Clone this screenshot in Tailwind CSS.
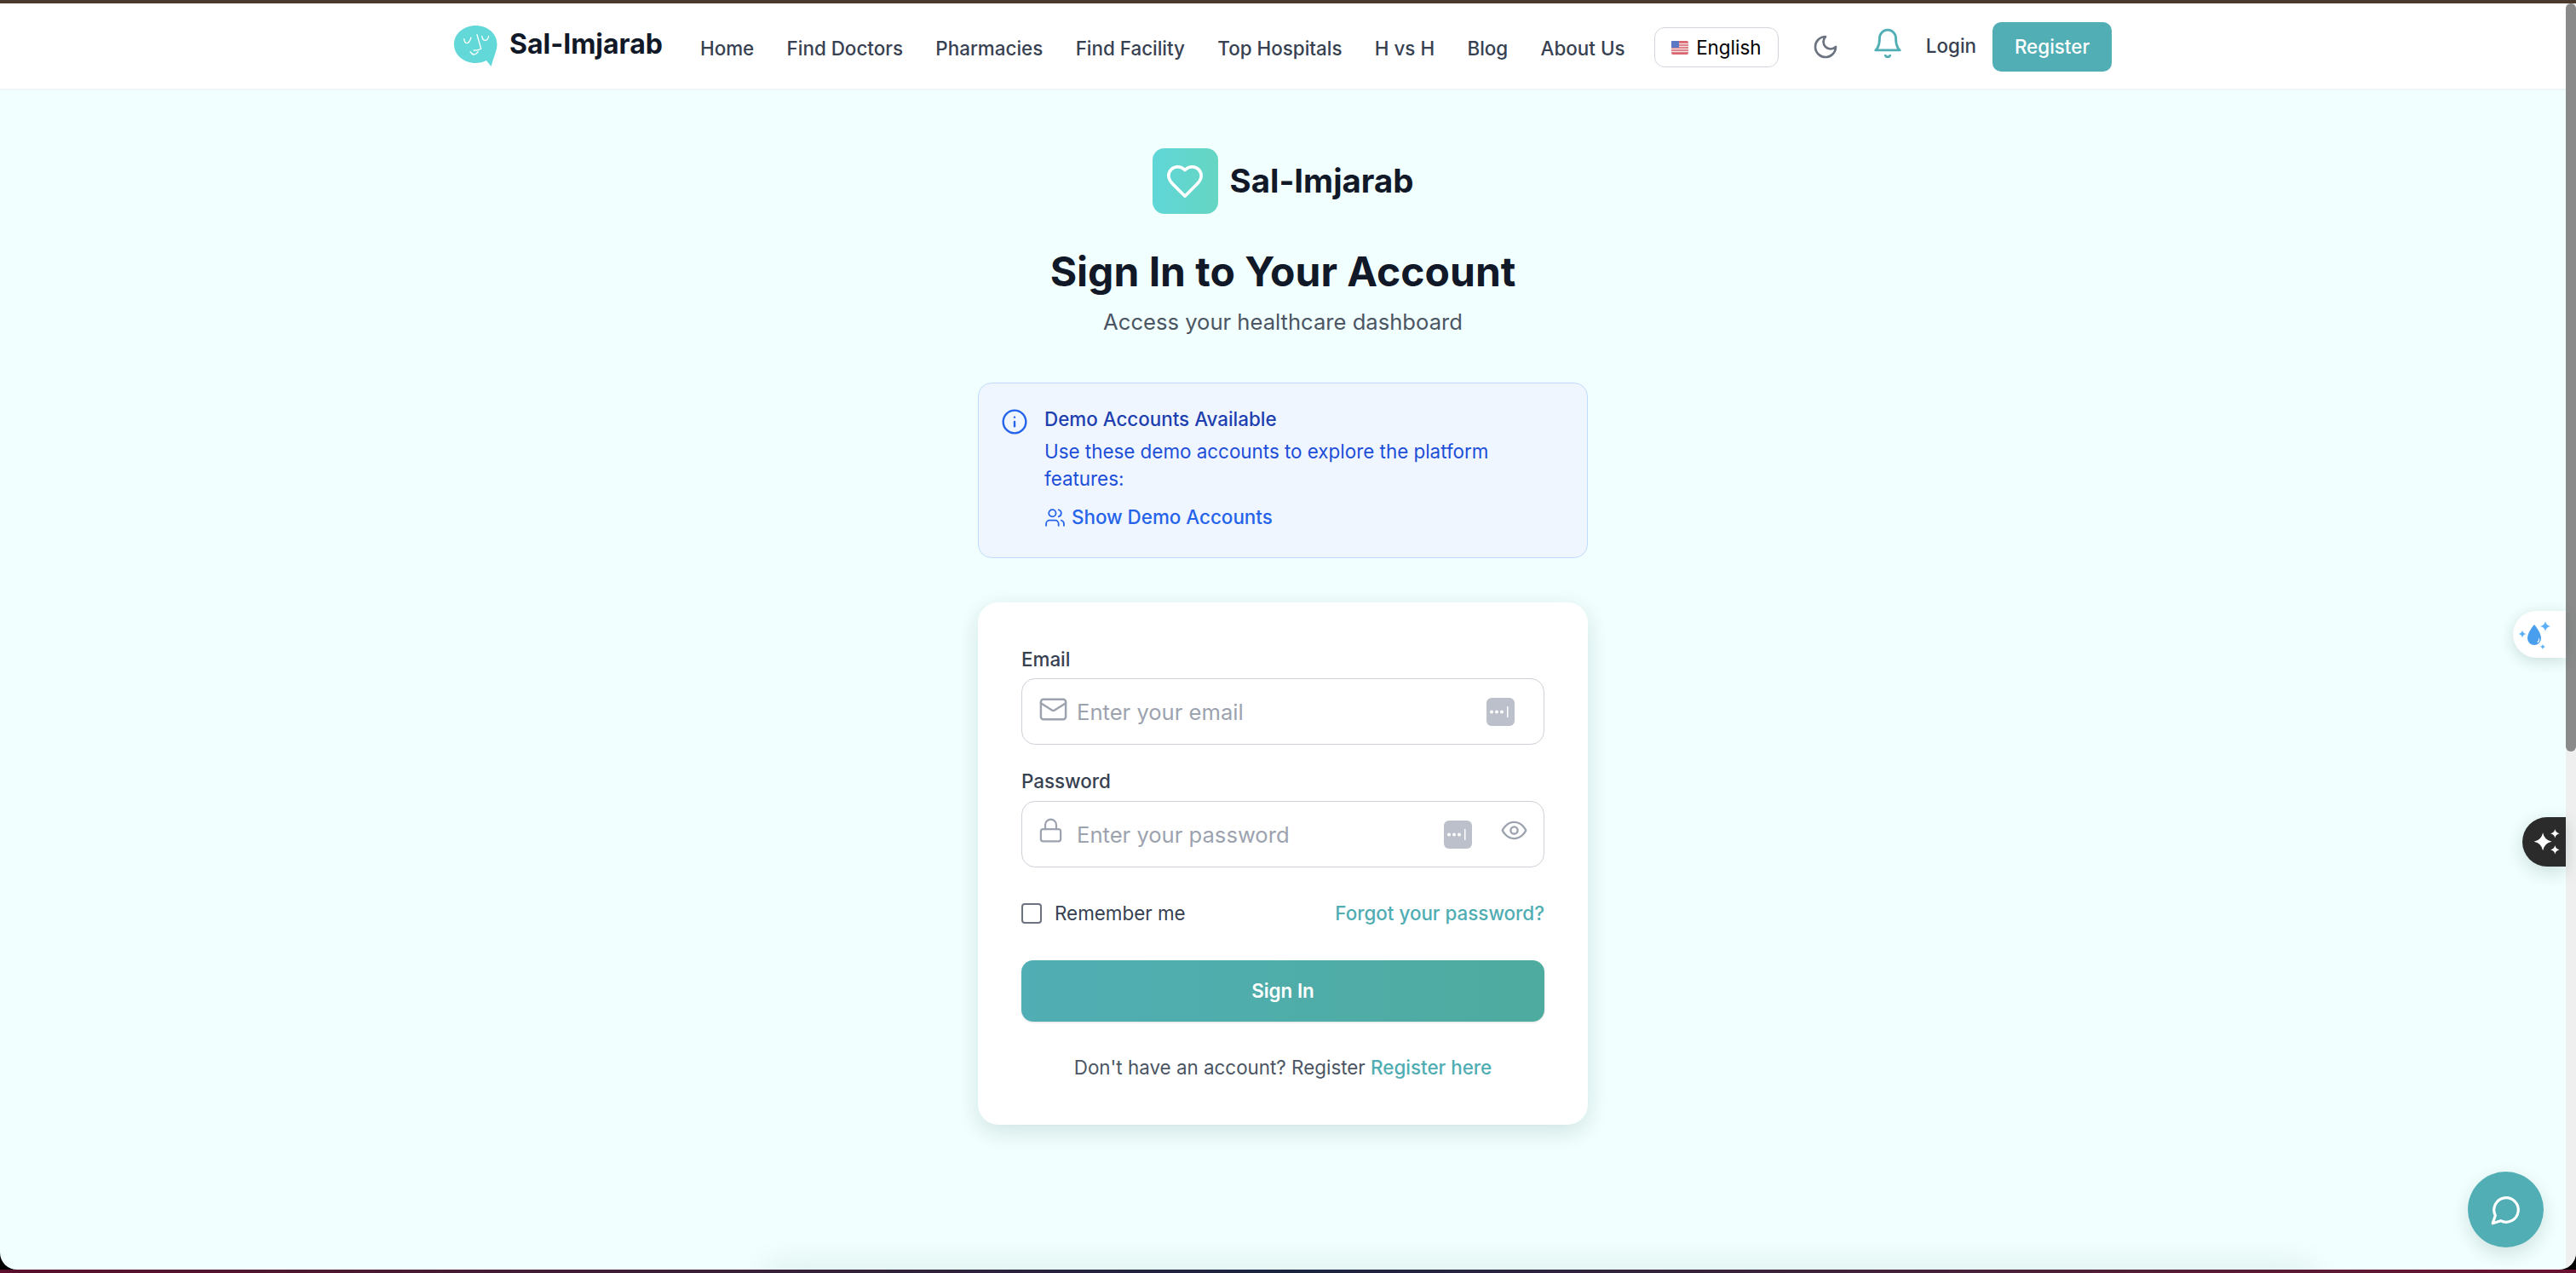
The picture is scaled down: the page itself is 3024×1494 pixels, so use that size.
<!DOCTYPE html>
<html lang="en">
<head>
  <meta charset="UTF-8" />
  <title>Sal-Imjarab | Sign In</title>
  <script src="https://cdn.jsdelivr.net/npm/@tailwindcss/browser@4"></script>
</head>
<body class="bg-black font-['Inter',sans-serif]">
<div class="h-screen w-screen overflow-hidden flex flex-col bg-black">
  <!-- desktop strip above the window -->
  <div class="h-[4px] bg-[#4a3a2d] shrink-0"></div>

  <div class="flex-1 min-h-0 flex overflow-hidden rounded-b-[20px] bg-[#f1fffe]">
    <div class="relative flex-1 min-w-0 flex flex-col">

      <!-- Navbar -->
      <header class="h-[102px] shrink-0 bg-white border-b-2 border-[#eef5f5]">
        <div class="w-[1946px] h-full mx-auto flex items-center whitespace-nowrap">
          <a href="#" class="flex items-center gap-[13px] shrink-0">
            <svg width="52" height="48" viewBox="0 0 52 48" fill="none">
              <path d="M25.5 0C39.5 0 50.5 9.5 50.5 22C50.5 29 47.5 34 43.500 48L38 41C34 43 30 44 25.5 44C11.5 44 0 34.5 0 22C0 9.5 11.5 0 25.5 0Z" fill="#62d8d8"/>
              <path d="M11.7 15.7Q12.5 20.7 15 20.7Q18 20.7 20 14M32.7 12.3Q33.5 17.3 36.7 17.3Q39.5 17.3 40.7 12.3M27 10.7L31.7 27.3Q28 29.5 23.3 29M19 30.7Q21 34 23.3 34Q26 34 28.3 30.7" stroke="white" stroke-width="1.3" stroke-linecap="round" stroke-linejoin="round"/>
            </svg>
            <span class="text-[32px] leading-none font-bold text-[#111827] mt-[-4px]">Sal-Imjarab</span>
          </a>
          <nav class="flex items-center gap-[38.4px] ml-[44px] mt-[6px] shrink-0 text-[22.4px] font-medium text-[#374151]">
            <a href="#">Home</a>
            <a href="#">Find Doctors</a>
            <a href="#">Pharmacies</a>
            <a href="#">Find Facility</a>
            <a href="#">Top Hospitals</a>
            <a href="#">H vs H</a>
            <a href="#">Blog</a>
            <a href="#">About Us</a>
          </nav>
          <div class="flex items-center ml-auto shrink-0">
            <div class="w-[146px] h-[47px] mt-[3px] flex items-center justify-center gap-[9px] rounded-[12px] border border-[#d1d5db] bg-white text-[22.4px] text-black">
              <svg width="20" height="16" viewBox="0 0 20 16">
                <rect width="20" height="16" rx="2" fill="#d9656f"/>
                <path d="M0 3.5h20M0 6.5h20M0 9.5h20M0 12.5h20" stroke="#f4e4e4" stroke-width="1.3"/>
                <rect width="9" height="8" rx="1" fill="#5b78c4"/>
              </svg>
              <span>English</span>
            </div>
            <svg class="ml-[39px] mt-[2px]" width="32" height="32" viewBox="0 0 24 24" fill="none" stroke="#6b7280" stroke-width="2" stroke-linecap="round" stroke-linejoin="round"><path d="M12 3a6 6 0 0 0 9 9 9 9 0 1 1-9-9Z"/></svg>
            <svg class="ml-[38px] mt-[-6px]" width="38" height="38" viewBox="0 0 24 24" fill="none" stroke="#50aeb4" stroke-width="1.8" stroke-linecap="round" stroke-linejoin="round"><path d="M6 8a6 6 0 0 1 12 0c0 7 3 9 3 9H3s3-2 3-9"/><path d="M10.3 21a1.94 1.94 0 0 0 3.4 0"/></svg>
            <a href="#" class="ml-[26px] text-[22.4px] font-medium text-[#374151]">Login</a>
            <a href="#" class="ml-[19px] w-[140px] h-[58px] mt-[2px] flex items-center justify-center rounded-[10px] bg-[#50aeb4] text-[22.4px] font-medium text-white">Register</a>
          </div>
        </div>
      </header>

      <!-- Sign in column -->
      <main class="flex-1 min-h-0 flex flex-col items-center pt-[68px]">
        <div class="flex items-center gap-[14px]">
          <div class="w-[77px] h-[77px] rounded-[14px] bg-gradient-to-r from-[#5fd6d8] to-[#66d6c2] flex items-center justify-center">
            <svg width="46" height="46" viewBox="0 0 24 24" fill="none" stroke="white" stroke-width="1.9" stroke-linecap="round" stroke-linejoin="round"><path d="M19 14c1.49-1.46 3-3.21 3-5.5A5.5 5.5 0 0 0 16.5 3c-1.76 0-3 .5-4.5 2-1.5-1.5-2.74-2-4.5-2A5.5 5.5 0 0 0 2 8.5c0 2.3 1.5 4.05 3 5.5l7 7Z"/></svg>
          </div>
          <span class="text-[38.4px] font-bold text-[#111827]">Sal-Imjarab</span>
        </div>
        <h1 class="mt-[39px] text-[48px] leading-[58px] font-bold text-[#111827]">Sign In to Your Account</h1>
        <p class="mt-[11px] text-[25.6px] leading-[38px] text-[#4b5563]">Access your healthcare dashboard</p>

        <!-- Demo notice -->
        <div class="mt-[52px] w-[716px] h-[206px] rounded-[16px] border border-[#bfdbfe] bg-[#eff6ff] flex gap-[20px] pl-[26px] pt-[26px]">
          <svg class="mt-[3px] shrink-0" width="32" height="32" viewBox="0 0 24 24" fill="none" stroke="#2563eb" stroke-width="1.8" stroke-linecap="round" stroke-linejoin="round"><circle cx="12" cy="12" r="10"/><path d="M12 16v-4"/><path d="M12 8h.01"/></svg>
          <div class="w-[560px] ml-[-1px]">
            <p class="text-[22.4px] leading-[32px] font-medium text-[#1e40af]">Demo Accounts Available</p>
            <p class="mt-[6px] text-[22.4px] leading-[32px] text-[#1d4ed8]">Use these demo accounts to explore the platform features:</p>
            <a href="#" class="mt-[13px] flex items-center gap-[7px] text-[22.4px] leading-[32px] font-medium text-[#2563eb]">
              <svg width="25" height="25" viewBox="0 0 24 24" fill="none" stroke="#2563eb" stroke-width="1.7" stroke-linecap="round" stroke-linejoin="round"><path d="M16 21v-2a4 4 0 0 0-4-4H6a4 4 0 0 0-4 4v2"/><circle cx="9" cy="7" r="4"/><path d="M22 21v-2a4 4 0 0 0-3-3.87"/><path d="M16 3.13a4 4 0 0 1 0 7.75"/></svg>
              Show Demo Accounts
            </a>
          </div>
        </div>

        <!-- Form card -->
        <form class="mt-[52px] w-[716px] h-[613px] rounded-[24px] bg-white shadow-[0_10px_24px_rgba(20,70,70,0.11),0_2px_30px_rgba(20,70,70,0.04)] px-[51px] pt-[51px]">
          <label class="block text-[22.4px] leading-[32px] font-medium text-[#374151]">Email</label>
          <div class="relative mt-[6px]">
            <svg class="absolute left-[20px] top-[19px]" width="35" height="35" viewBox="0 0 24 24" fill="none" stroke="#9ca3af" stroke-width="1.7" stroke-linecap="round" stroke-linejoin="round"><rect width="20" height="16" x="2" y="4" rx="2"/><path d="m22 7-8.97 5.7a1.94 1.94 0 0 1-2.06 0L2 7"/></svg>
            <input type="email" placeholder="Enter your email" class="block w-full h-[78px] rounded-[16px] border border-[#cdd1d8] bg-white pl-[64px] text-[25.6px] placeholder:text-[#9ca3af]" />
            <svg class="absolute left-[546px] top-[23px]" width="33" height="33" viewBox="0 0 33 33"><rect width="33" height="33" rx="6" fill="#bbc0ca"/><circle cx="6" cy="16.5" r="2" fill="white"/><circle cx="12" cy="16.5" r="2" fill="white"/><circle cx="18" cy="16.5" r="2" fill="white"/><rect x="24" y="10" width="1.5" height="13" fill="white"/></svg>
          </div>

          <label class="block mt-[27px] text-[22.4px] leading-[32px] font-medium text-[#374151]">Password</label>
          <div class="relative mt-[7px]">
            <svg class="absolute left-[19px] top-[19px]" width="31" height="31" viewBox="0 0 24 24" fill="none" stroke="#9ca3af" stroke-width="1.7" stroke-linecap="round" stroke-linejoin="round"><rect width="18" height="11" x="3" y="11" rx="2" ry="2"/><path d="M7 11V7a5 5 0 0 1 10 0v4"/></svg>
            <input type="password" placeholder="Enter your password" class="block w-full h-[78px] rounded-[16px] border border-[#cdd1d8] bg-white pl-[64px] text-[25.6px] placeholder:text-[#9ca3af]" />
            <svg class="absolute left-[496px] top-[23px]" width="33" height="33" viewBox="0 0 33 33"><rect width="33" height="33" rx="6" fill="#bbc0ca"/><circle cx="6" cy="16.5" r="2" fill="white"/><circle cx="12" cy="16.5" r="2" fill="white"/><circle cx="18" cy="16.5" r="2" fill="white"/><rect x="24" y="10" width="1.5" height="13" fill="white"/></svg>
            <svg class="absolute left-[562px] top-[18px]" width="33" height="33" viewBox="0 0 24 24" fill="none" stroke="#9ca3af" stroke-width="1.7" stroke-linecap="round" stroke-linejoin="round"><path d="M2 12s3-7 10-7 10 7 10 7-3 7-10 7-10-7-10-7Z"/><circle cx="12" cy="12" r="3"/></svg>
          </div>

          <div class="mt-[38px] flex items-center justify-between text-[22.4px] leading-[32px]">
            <label class="flex items-center gap-[15px] text-[#374151]">
              <span class="w-[24px] h-[24px] rounded-[4px] border-2 border-[#6b7280] bg-white"></span>
              Remember me
            </label>
            <a href="#" class="font-medium text-[#4fadb3]">Forgot your password?</a>
          </div>

          <button type="button" class="mt-[39px] w-full h-[72px] rounded-[14px] bg-gradient-to-r from-[#50aeb4] to-[#4eab9f] shadow-sm text-[22.4px] font-semibold text-white">Sign In</button>

          <p class="mt-[38px] text-center text-[22.4px] leading-[32px] text-[#4b5563]">Don't have an account? Register <a href="#" class="font-medium text-[#4fadb3]">Register here</a></p>
        </form>
      </main>

      <!-- faint shadow at the bottom edge -->
      <div class="absolute -bottom-[30px] left-[900px] right-[300px] h-[30px] shadow-[0_0_40px_rgba(20,70,70,0.12)] pointer-events-none"></div>

      <!-- Floating widgets -->
      <div class="absolute right-0 top-[713px] w-[62px] h-[55px] rounded-l-full bg-white shadow-[0_4px_16px_rgba(20,70,70,0.18)] flex items-center justify-start pl-[5px]">
        <svg width="40" height="40" viewBox="0 0 40 40">
          <path d="M20 8C20 8 12 17 12 24a8 8 0 0 0 16 0C28 17 20 8 20 8Z" fill="#4a9eee"/>
          <path d="M25 23a5 5 0 0 1 0 6h-2a6 6 0 0 0 2-6Z" fill="white"/>
          <path d="M33 4Q33.8 9.2 39 10Q33.8 10.800 33 16Q32.200 10.800 27 10Q32.200 9.200 33 4Z" fill="#5bb0f5"/>
          <path d="M6 14.500Q6.600 18.400 10.500 19Q6.600 19.600 6 23.500Q5.400 19.600 1.500 19Q5.400 18.400 6 14.500Z" fill="#5bb0f5"/>
          <path d="M30 31Q30.400 33.600 33 34Q30.400 34.400 30 37Q29.600 34.400 27 34Q29.600 33.600 30 31Z" fill="#5bb0f5"/>
        </svg>
      </div>
      <div class="absolute right-0 top-[955px] w-[51px] h-[58px] rounded-l-full bg-[#2b2b2b] shadow-[0_6px_20px_rgba(20,70,70,0.18)] flex items-center pl-[13px]">
        <svg width="40" height="40" viewBox="0 0 40 40" fill="white">
          <path d="M11.700 8.700Q13.500 17.900 22.700 19.700Q13.500 21.500 11.700 30.700Q9.900 21.500 0.700 19.700Q9.900 17.900 11.700 8.700Z"/>
          <path d="M26.700 4.200Q27.600 8.800 32.200 9.700Q27.600 10.600 26.700 15.200Q25.800 10.600 21.200 9.700Q25.800 8.800 26.700 4.200Z"/>
          <path d="M26.700 24.200Q27.600 28.800 32.200 29.700Q27.600 30.600 26.700 35.200Q25.800 30.600 21.200 29.700Q25.800 28.800 26.700 24.200Z"/>
        </svg>
      </div>
      <button class="absolute left-[2897px] top-[1371px] w-[89px] h-[89px] rounded-full bg-[#50aeb4] shadow-[0_8px_20px_rgba(20,70,70,0.15)] flex items-center justify-center">
        <svg width="38" height="38" viewBox="0 0 24 24" fill="none" stroke="white" stroke-width="2" stroke-linecap="round" stroke-linejoin="round"><path d="M7.900 20A9 9 0 1 0 4 16.100L2 22Z"/></svg>
      </button>
    </div>

    <!-- browser scrollbar -->
    <div class="w-[12px] shrink-0 bg-[#efefef]">
      <div class="h-[878px] rounded-b-full rounded-t-full bg-[#8a8a8a]"></div>
    </div>
  </div>

  <!-- desktop strip below the window -->
  <div class="h-[4px] shrink-0 bg-gradient-to-r from-[#5a0f2c] via-[#1a2440] to-[#6a1030]"></div>
</div>
</body>
</html>
